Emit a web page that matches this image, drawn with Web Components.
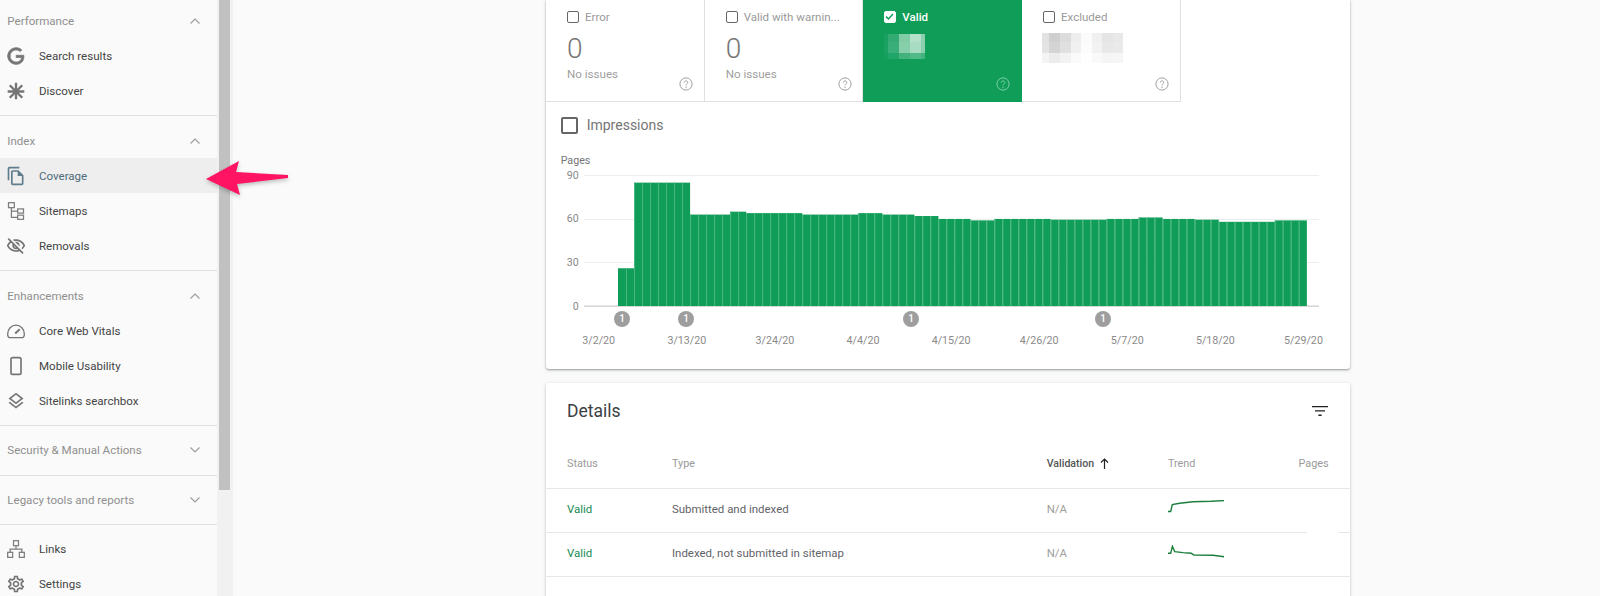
<!DOCTYPE html>
<html>

<head>
    <title>Index coverage</title>
    <style>
        body {
            margin: 0;
            height: 596px;
            overflow: hidden;
            background: #fafafa;
            font-family: Roboto, "Liberation Sans", sans-serif;
        }

        #page {
            display: grid;
            grid-template-columns: 217px 15.7px 1fr;
            height: 596px;
            overflow: hidden;
            position: relative;
        }

        #track {
            background: #f1f1f1;
            padding: 0 2.3px 0 2px;
        }

        #track div {
            height: 490px;
            background: #c1c1c1;
        }

        #main {
            padding: 0 250px 0 313.3px;
        }

        #arrow {
            position: absolute;
            left: 200px;
            top: 155px;
            filter: drop-shadow(0 2px 2px rgba(0, 0, 0, .25));
        }
    </style>
</head>

<body>

    <template id="nav-section-template">
        <style>
            :host {
                display: block;
                padding-bottom: 6.6px;
                border-bottom: 1px solid #e0e0e0;
                overflow: hidden;
            }

            #head {
                display: flex;
                align-items: center;
                justify-content: space-between;
                box-sizing: border-box;
                height: 41.8px;
                padding: 6.4px 16px 0 7.3px;
                font-size: 11.55px;
                color: #8f8f8f;
            }

            svg {
                display: block;
            }
        </style>
        <div id="head">
            <span id="title"></span>
            <svg width="12" height="8" viewBox="0 0 12 8" fill="none" stroke="#9e9e9e" stroke-width="1.2">
                <path id="chevron" d=""></path>
            </svg>
        </div>
        <slot></slot>
    </template>

    <template id="nav-item-template">
        <style>
            :host {
                display: flex;
                align-items: center;
                height: 35.2px;
                padding-left: 5.7px;
                font-size: 11.55px;
                color: #444;
            }

            :host([active]) {
                background: #eee;
                color: #4d6a79;
            }

            svg {
                width: 20px;
                height: 20px;
                margin-right: 13.3px;
                fill: #757575;
                flex: none;
            }

            :host([active]) svg {
                fill: #5f7d8c;
            }
        </style>
        <svg viewBox="0 0 24 24"></svg>
        <slot></slot>
    </template>

    <template id="status-tab-template">
        <style>
            :host {
                display: block;
                box-sizing: border-box;
                height: 102px;
                padding: 10px 0 0 21px;
                border-right: 1px solid #e0e0e0;
                border-bottom: 1px solid #e0e0e0;
                position: relative;
                font-size: 11.5px;
                color: #9a9a9a;
            }

            :host([selected]) {
                background: #0f9d58;
                border-color: #0f9d58;
                color: #fff;
            }

            #top {
                display: flex;
                align-items: center;
                gap: 6px;
                height: 13px;
            }

            #box {
                box-sizing: border-box;
                width: 12px;
                height: 12px;
                border: 1.6px solid #666;
                border-radius: 2px;
                flex: none;
            }

            :host([selected]) #box {
                background: #fff;
                border-color: #fff;
            }

            :host([selected]) #top {
                font-weight: 500;
            }

            #box svg {
                display: none;
                width: 9px;
                height: 9px;
            }

            :host([selected]) #box svg {
                display: block;
            }

            #count {
                font-size: 28px;
                font-weight: 300;
                line-height: 32px;
                margin-top: 10px;
                color: #757575;
            }

            #note {
                font-size: 11.6px;
                line-height: 14px;
                margin-top: 2px;
                color: #a0a0a0;
            }

            #help {
                position: absolute;
                right: 10.8px;
                bottom: 10px;
                display: block;
            }
        </style>
        <div id="top">
            <span id="box"><svg viewBox="0 0 9 9" fill="none" stroke="#0f9d58" stroke-width="1.5"><path d="M1 4.5l2.4 2.4L8 2"></path></svg></span>
            <span id="label"></span>
        </div>
        <div id="count"></div>
        <div id="note"></div>
        <slot></slot>
        <svg id="help" width="14" height="14" viewBox="0 0 14 14" fill="none">
            <circle cx="7" cy="7" r="6.1" stroke="currentColor"></circle>
            <path d="M5.2 5.6c0-1 .8-1.7 1.8-1.7s1.8.7 1.8 1.6c0 1.4-1.8 1.4-1.8 2.9" stroke="currentColor"></path>
            <circle cx="7" cy="10.2" r=".7" fill="currentColor"></circle>
        </svg>
    </template>

    <template id="pixel-block-template">
        <style>
            :host {
                display: grid;
            }

            div {
                min-width: 0;
            }
        </style>
    </template>

    <template id="coverage-chart-template">
        <style>
            :host {
                display: block;
                padding: 20px 0 21px 14.7px;
                color: #757575;
                font-size: 10.7px;
                line-height: 14px;
            }

            #plot {
                display: flex;
                gap: 5px;
            }

            #yaxis {
                display: flex;
                flex-direction: column;
                justify-content: space-between;
                width: 18px;
                height: 145px;
                margin-top: 1px;
                text-align: right;
                color: #8a8a8a;
            }

            svg {
                display: block;
                margin-top: 7px;
            }

            #pins {
                display: flex;
                margin-top: -3px;
            }

            #pins span {
                width: 16px;
                height: 16px;
                border-radius: 50%;
                background: #9e9e9e;
                color: #fff;
                font-size: 10px;
                font-weight: 500;
                line-height: 16px;
                text-align: center;
                flex: none;
            }

            #xaxis {
                display: grid;
                grid-template-columns: repeat(9, 88.1px);
                margin: 7px 0 0 -6px;
                text-align: center;
                color: #8a8a8a;
            }
        </style>
        <div>Pages</div>
        <div id="plot">
            <div id="yaxis"><span>90</span><span>60</span><span>30</span><span>0</span></div>
            <svg id="bars" width="735" height="132" viewBox="0 0 735 132"></svg>
        </div>
        <div id="pins">
            <span style="margin-left: 53.5px">1</span>
            <span style="margin-left: 48px">1</span>
            <span style="margin-left: 209px">1</span>
            <span style="margin-left: 176px">1</span>
        </div>
        <div id="xaxis">
            <span>3/2/20</span><span>3/13/20</span><span>3/24/20</span><span>4/4/20</span><span>4/15/20</span><span>4/26/20</span><span>5/7/20</span><span>5/18/20</span><span>5/29/20</span>
        </div>
    </template>

    <template id="overview-card-template">
        <style>
            :host {
                display: block;
                background: #fff;
                border-radius: 0 0 3px 3px;
                box-shadow: 0 1px 2px rgba(60, 64, 67, .45), 0 1px 4px rgba(60, 64, 67, .12);
            }

            #tabs {
                display: grid;
                grid-template-columns: repeat(4, 158.7px);
            }

            #impressions {
                display: flex;
                align-items: center;
                gap: 9px;
                height: 17px;
                padding: 14.7px 0 0 14.7px;
                font-size: 14px;
                color: #757575;
            }

            #impressions i {
                box-sizing: border-box;
                width: 17px;
                height: 17px;
                border: 2px solid #666;
                border-radius: 2px;
            }
        </style>
        <div id="tabs"><slot name="tabs"></slot></div>
        <div id="impressions"><i></i>Impressions</div>
        <slot></slot>
    </template>

    <template id="details-card-template">
        <style>
            :host {
                display: block;
                position: relative;
                margin-top: 14px;
                background: #fff;
                border-radius: 3px 3px 0 0;
                box-shadow: 0 1px 2px rgba(60, 64, 67, .3), 0 1px 4px rgba(60, 64, 67, .12);
                overflow: hidden;
                height: 240px;
            }

            #head {
                display: flex;
                align-items: center;
                justify-content: space-between;
                height: 56px;
                padding: 0 22px 0 21px;
                font-size: 17.5px;
                color: #3c4043;
            }

            svg {
                display: block;
            }

            #mask {
                position: absolute;
                left: 761px;
                top: 112px;
                width: 31px;
                height: 72px;
                background: #fff;
            }

            #pager {
                display: flex;
                justify-content: flex-end;
                gap: 34px;
                padding: 19px 30px 0 0;
            }

            #pager i {
                width: 2px;
                height: 2px;
                background: #c4c4c4;
            }
        </style>
        <div id="head">
            <span>Details</span>
            <svg width="16" height="10" viewBox="0 0 16 10" fill="#222">
                <path d="M0 0h16v1.3H0zM3 4.3h10v1.3H3zM6.4 8.6h3.2V10H6.4z"></path>
            </svg>
        </div>
        <slot></slot>
        <div id="pager"><i></i><i></i></div>
        <div id="mask"></div>
    </template>

    <template id="details-row-template">
        <style>
            :host {
                display: grid;
                grid-template-columns: 105px 374.7px 121.3px 1fr auto;
                align-items: center;
                box-sizing: border-box;
                height: 44px;
                padding: 0 21.5px 3px 21px;
                border-bottom: 1px solid #e8e8e8;
                font-size: 11.45px;
                color: #5f6368;
            }

            :host([header]) {
                height: 50px;
                padding-bottom: 0;
                font-size: 10.8px;
                color: #9a9a9a;
            }

            ::slotted(.valid) {
                color: #188a52;
            }

            ::slotted(.na) {
                color: #9e9e9e;
            }

            ::slotted(.sort) {
                display: flex;
                align-items: center;
                gap: 6px;
                font-size: 10.6px;
                color: #555;
                font-weight: 500;
            }
        </style>
        <slot></slot>
    </template>

    <div id="page">
        <nav-list></nav-list>
        <div id="track"><div></div></div>
        <div id="main">
            <overview-card>
                <status-tab slot="tabs" label="Error" count="0" note="No issues"></status-tab>
                <status-tab slot="tabs" label="Valid with warnin..." count="0" note="No issues"></status-tab>
                <status-tab slot="tabs" label="Valid" selected>
                    <pixel-block
                        data-cols="4px 11px 11px 11px 4px"
                        data-rows="8.3px 10.7px 6px"
                        data-top="34"
                        data-cells="#18a060 #35ab74 #7fcca5 #b3e1ca #8bcfad #1aa262 #3aae78 #87cfab #a8dcc2 #8ccfae #12a05b #22a568 #43b27d #52b989 #45b37f"></pixel-block>
                </status-tab>
                <status-tab slot="tabs" label="Excluded">
                    <pixel-block
                        data-cols="7.3px 10.7px 11px 10px 10.7px 10.3px 10.7px 10.7px"
                        data-rows="9px 11px 10px"
                        data-top="33"
                        data-cells="#e2e2e2 #cfcfcf #dcdcdc #eeeeee #fbfbfb #f0f0f0 #e5e5e5 #e8e8e8 #e4e4e4 #d4d4d4 #e0e0e0 #f1f1f1 #fcfcfc #f2f2f2 #e8e8e8 #eaeaea #f4f4f4 #ececec #f3f3f3 #fafafa #fefefe #f9f9f9 #f5f5f5 #f6f6f6"></pixel-block>
                </status-tab>
                <coverage-chart></coverage-chart>
            </overview-card>
            <details-card>
                <details-row header>
                    <span>Status</span><span>Type</span>
                    <span class="sort">Validation
                        <svg width="9" height="11" viewBox="0 0 9 11" fill="none" stroke="#222" stroke-width="1.2"><path d="M4.500 11V1M1 4.500l3.500-3.500 3.500 3.500"></path></svg>
                    </span>
                    <span>Trend</span><span>Pages</span>
                </details-row>
                <details-row>
                    <span class="valid">Valid</span><span>Submitted and indexed</span><span class="na">N/A</span>
                    <svg width="58" height="13" viewBox="0 0 58 13" fill="none" stroke="#1b7f3b" stroke-width="1.4" style="display:block;margin-top:-4px"><path d="M0 11.5h2.7l1.6-7L11.7 3.2 25 1.7l18.500-.400L56 .6"></path></svg>
                    <span></span>
                </details-row>
                <details-row>
                    <span class="valid">Valid</span><span>Indexed, not submitted in sitemap</span><span class="na">N/A</span>
                    <svg width="58" height="13" viewBox="0 0 58 13" fill="none" stroke="#1b7f3b" stroke-width="1.4" style="display:block;margin-top:-3px"><path d="M0 8.300h2.700l1.700-7 2.300 5.300 8.300 1 8.300.7 2.700 1.700 19 .3L56 11.700"></path></svg>
                    <span></span>
                </details-row>
            </details-card>
        </div>
        <svg id="arrow" width="92" height="46" viewBox="0 0 92 46">
            <path d="M6 24 39 6 36 17 88 20v3L37 29 40 40Z" fill="#ff1464"></path>
        </svg>
    </div>

    <script>
        // material style paths, 24x24
        const ICONS = {
            google: '<path stroke="#757575" stroke-width=".9" d="M21.35 11.1h-9.17v2.73h6.51c-.33 3.81-3.5 5.44-6.5 5.44C8.36 19.27 5 16.25 5 12c0-4.1 3.2-7.27 7.2-7.27 3.09 0 4.9 1.97 4.9 1.97L19 4.72S16.56 2 12.1 2C6.42 2 2 6.8 2 12c0 5.05 4.13 10 10.22 10 5.35 0 9.25-3.67 9.25-9.09 0-1.15-.15-1.81-.15-1.81z"/>',
            asterisk: '<path d="M10.6 2h2.800v7.200l5.100-5.100 2 2-5.100 5.100H22v2.800h-6.600l5.100 5.100-2 2-5.100-5.100V22h-2.800v-6l-5.100 5.100-2-2 5.100-5.100H2v-2.800h6.600L3.500 6.100l2-2 5.100 5.100z"/>',
            copy: '<path d="M16 1H4c-1.100 0-2 .9-2 2v14h2V3h12V1zm-1 4H8c-1.100 0-1.990.9-1.990 2L6 21c0 1.100.89 2 1.990 2H19c1.100 0 2-.9 2-2V11l-6-6zM8 21V7h6v5h5v9H8z"/>',
            tree: '<g fill="none" stroke="#7d7d7d" stroke-width="1.500"><rect x="3" y="2" width="7" height="6"/><rect x="14" y="9.500" width="7" height="5"/><rect x="14" y="17" width="7" height="5"/><path d="M6.500 8v11.500H14M6.500 12H14"/></g>',
            eyeoff: '<path d="M12 6c3.790 0 7.170 2.130 8.820 5.500-.59 1.220-1.420 2.270-2.410 3.120l1.410 1.410c1.390-1.230 2.490-2.770 3.180-4.530C21.270 7.110 17 4 12 4c-1.270 0-2.490.2-3.640.57l1.650 1.650C10.660 6.090 11.320 6 12 6zm-1.070 1.140L13 9.210c.57.25 1.030.71 1.280 1.280l2.070 2.070c.08-.34.14-.7.14-1.070C16.500 9.010 14.480 7 12 7c-.37 0-.72.05-1.070.14zM2.010 3.870l2.680 2.680C3.060 7.830 1.770 9.530 1 11.500 2.730 15.890 7 19 12 19c1.520 0 2.980-.29 4.320-.82l3.420 3.420 1.410-1.410L3.420 2.450 2.010 3.870zm7.500 7.500l2.610 2.610c-.04.01-.08.02-.12.02-1.380 0-2.500-1.120-2.500-2.500 0-.05.01-.08.01-.13zm-3.400-3.400l1.750 1.750c-.23.55-.36 1.150-.36 1.780 0 2.480 2.020 4.500 4.500 4.500.63 0 1.230-.13 1.770-.36l.98.98c-.88.24-1.800.38-2.750.38-3.790 0-7.170-2.130-8.820-5.500.7-1.430 1.720-2.610 2.930-3.530z"/>',
            gauge: '<g fill="none" stroke="#757575" stroke-width="1.600"><path d="M5 20h14c1.500 0 3-1.500 3-4.500C22 9.500 17.500 5 12 5S2 9.500 2 15.500C2 18.500 3.500 20 5 20z"/><path d="M11 15l5.500-5" stroke-width="2.400"/></g>',
            phone: '<rect x="6" y="2" width="12" height="20" rx="2" fill="none" stroke="#757575" stroke-width="2"/>',
            layers: '<path d="M11.990 18.540l-7.370-5.730L3 14.070l9 7 9-7-1.630-1.270-7.380 5.740zM12 16l7.360-5.730L21 9l-9-7-9 7 1.630 1.270L12 16zm0-11.470L17.740 9 12 13.470 6.260 9 12 4.530z"/>',
            hub: '<g fill="none" stroke="#7d7d7d" stroke-width="1.500"><rect x="9" y="2" width="6" height="6"/><rect x="2" y="16" width="6" height="6"/><rect x="16" y="16" width="6" height="6"/><path d="M12 8v4M5 16v-4h14v4"/></g>',
            gear: '<path d="M19.430 12.980c.04-.32.07-.64.07-.98 0-.34-.03-.66-.07-.98l2.110-1.650c.19-.15.24-.42.12-.64l-2-3.460c-.09-.16-.26-.25-.44-.25-.06 0-.12.01-.17.03l-2.490 1c-.52-.4-1.080-.73-1.690-.98l-.38-2.650C14.460 2.180 14.250 2 14 2h-4c-.25 0-.46.18-.49.42l-.38 2.650c-.61.25-1.170.59-1.690.98l-2.490-1c-.06-.02-.12-.03-.18-.03-.17 0-.34.09-.43.25l-2 3.460c-.13.22-.07.49.12.64l2.110 1.650c-.04.32-.07.65-.07.98 0 .33.03.66.07.98l-2.110 1.650c-.19.15-.24.42-.12.64l2 3.460c.09.16.26.25.44.25.06 0 .12-.01.17-.03l2.490-1c.52.4 1.080.73 1.690.98l.38 2.650c.03.24.24.42.49.42h4c.25 0 .46-.18.49-.42l.38-2.650c.61-.25 1.170-.59 1.690-.98l2.490 1c.06.02.12.03.18.03.17 0 .34-.09.43-.25l2-3.460c.12-.22.07-.49-.12-.64l-2.110-1.650zm-1.980-1.710c.04.31.05.52.05.73 0 .21-.02.43-.05.73l-.14 1.130.89.7 1.080.84-.7 1.210-1.270-.51-1.040-.42-.9.68c-.43.32-.84.56-1.250.73l-1.060.43-.16 1.130-.2 1.350h-1.400l-.19-1.350-.16-1.130-1.060-.43c-.43-.18-.83-.41-1.230-.71l-.91-.7-1.060.43-1.270.51-.7-1.210 1.080-.84.89-.7-.14-1.130c-.03-.31-.05-.54-.05-.74s.02-.43.05-.73l.14-1.130-.89-.7-1.080-.84.7-1.210 1.270.51 1.040.42.9-.68c.43-.32.84-.56 1.250-.73l1.060-.43.16-1.130.2-1.350h1.390l.19 1.350.16 1.130 1.060.43c.43.18.83.41 1.230.71l.91.7 1.060-.43 1.270-.51.7 1.210-1.070.85-.89.7.14 1.130zM12 8c-2.210 0-4 1.790-4 4s1.790 4 4 4 4-1.790 4-4-1.790-4-4-4zm0 6c-1.100 0-2-.9-2-2s.9-2 2-2 2 .9 2 2-.9 2-2 2z"/>'
        };

        // value, how many days
        const BARS = [[26, 2], [85, 7], [63, 5], [65, 2], [64, 7], [63, 7], [64, 3], [63, 4], [62, 3], [60, 4], [59, 3],
            [60, 7], [59.5, 7], [60, 4], [61, 3], [60, 4], [59.5, 3], [58, 7], [59, 4]];

        const fromTemplate = (el, id) => {
            const shadowRoot = el.attachShadow({ mode: "open" });
            shadowRoot.appendChild(document.getElementById(id).content.cloneNode(true));
            return shadowRoot;
        };

        customElements.define("nav-section", class NavSection extends HTMLElement {
            constructor() {
                super();
                const root = fromTemplate(this, "nav-section-template");
                root.getElementById("title").textContent = this.getAttribute("title-text");
                root.getElementById("chevron").setAttribute("d", this.hasAttribute("open") ? "M1.500 6.500L6 2l4.500 4.500" : "M1.500 1.500L6 6l4.500-4.500");
            }
        });

        customElements.define("nav-item", class NavItem extends HTMLElement {
            constructor() {
                super();
                const root = fromTemplate(this, "nav-item-template");
                root.querySelector("svg").innerHTML = ICONS[this.getAttribute("icon")];
            }
        });

        customElements.define("nav-list", class NavList extends HTMLElement {
            constructor() {
                super();
                const shadowRoot = this.attachShadow({ mode: "open" });
                const sections = [
                    ["Performance", true, [["google", "Search results"], ["asterisk", "Discover"]]],
                    ["Index", true, [["copy", "Coverage", true], ["tree", "Sitemaps"], ["eyeoff", "Removals"]]],
                    ["Enhancements", true, [["gauge", "Core Web Vitals"], ["phone", "Mobile Usability"], ["layers", "Sitelinks searchbox"]]],
                    ["Security &amp; Manual Actions", false, []],
                    ["Legacy tools and reports", false, []]
                ];
                const html = sections.map(([title, open, items]) =>
                    `<nav-section title-text="${title}" ${open ? "open" : ""}>` +
                    items.map(([icon, text, active]) => `<nav-item icon="${icon}" ${active ? "active" : ""}>${text}</nav-item>`).join("") +
                    `</nav-section>`).join("");
                shadowRoot.innerHTML = `<style>
                    :host { display: block; height: 596px; overflow: hidden; background: #fafafa; }
                    #list { margin-top: -3.3px; }
                    #foot { padding-top: 6.4px; }
                </style>
                <div id="list">${html}
                    <div id="foot">
                        <nav-item icon="hub">Links</nav-item>
                        <nav-item icon="gear">Settings</nav-item>
                    </div>
                </div>`;
            }
        });

        customElements.define("status-tab", class StatusTab extends HTMLElement {
            constructor() {
                super();
                const root = fromTemplate(this, "status-tab-template");
                root.getElementById("label").textContent = this.getAttribute("label");
                const count = this.getAttribute("count");
                if (count === null) {
                    root.getElementById("count").remove();
                    root.getElementById("note").remove();
                } else {
                    root.getElementById("count").textContent = count;
                    root.getElementById("note").textContent = this.getAttribute("note");
                }
                if (this.hasAttribute("selected")) {
                    root.getElementById("help").style.color = "#7fd0a8";
                } else {
                    root.getElementById("help").style.color = "#a0a0a0";
                }
            }
        });

        customElements.define("pixel-block", class PixelBlock extends HTMLElement {
            constructor() {
                super();
                const root = fromTemplate(this, "pixel-block-template");
                const style = document.createElement("style");
                // the tab header ends at 23px
                style.textContent = `:host { grid-template-columns: ${this.dataset.cols}; grid-template-rows: ${this.dataset.rows}; margin: ${this.dataset.top - 23}px 0 0 ${this.dataset.top === "33" ? -1 : 0}px; filter: blur(.6px); }`;
                root.appendChild(style);
                this.dataset.cells.split(" ").forEach(color => {
                    const cell = document.createElement("div");
                    cell.style.background = color;
                    root.appendChild(cell);
                });
            }
        });

        customElements.define("coverage-chart", class CoverageChart extends HTMLElement {
            constructor() {
                super();
                const root = fromTemplate(this, "coverage-chart-template");
                const scale = 130.6 / 90;
                let out = "";
                [30, 60, 90].forEach(v => {
                    out += `<rect x="0" y="${Math.round(130.6 - v * scale)}" width="735" height="1" fill="#eeeeee"/>`;
                });
                out += `<rect x="0" y="130.600" width="735" height="1" fill="#bdbdbd"/>`;
                let x = 34; // first bar at 618
                BARS.forEach(([value, days]) => {
                    for (let i = 0; i < days; i++) {
                        const h = value * scale;
                        out += `<rect x="${x}" y="${131 - h}" width="8.010" height="${h}" fill="#0f9d58"/>`;
                        if (x > 34) out += `<rect x="${x}" y="${131 - h}" width="1" height="${h}" fill="#4cb684"/>`;
                        x += 8.01;
                    }
                });
                root.getElementById("bars").innerHTML = out;
            }
        });

        customElements.define("overview-card", class OverviewCard extends HTMLElement {
            constructor() {
                super();
                fromTemplate(this, "overview-card-template");
            }
        });

        customElements.define("details-card", class DetailsCard extends HTMLElement {
            constructor() {
                super();
                fromTemplate(this, "details-card-template");
            }
        });

        customElements.define("details-row", class DetailsRow extends HTMLElement {
            constructor() {
                super();
                fromTemplate(this, "details-row-template");
            }
        });
    </script>
</body>

</html>
